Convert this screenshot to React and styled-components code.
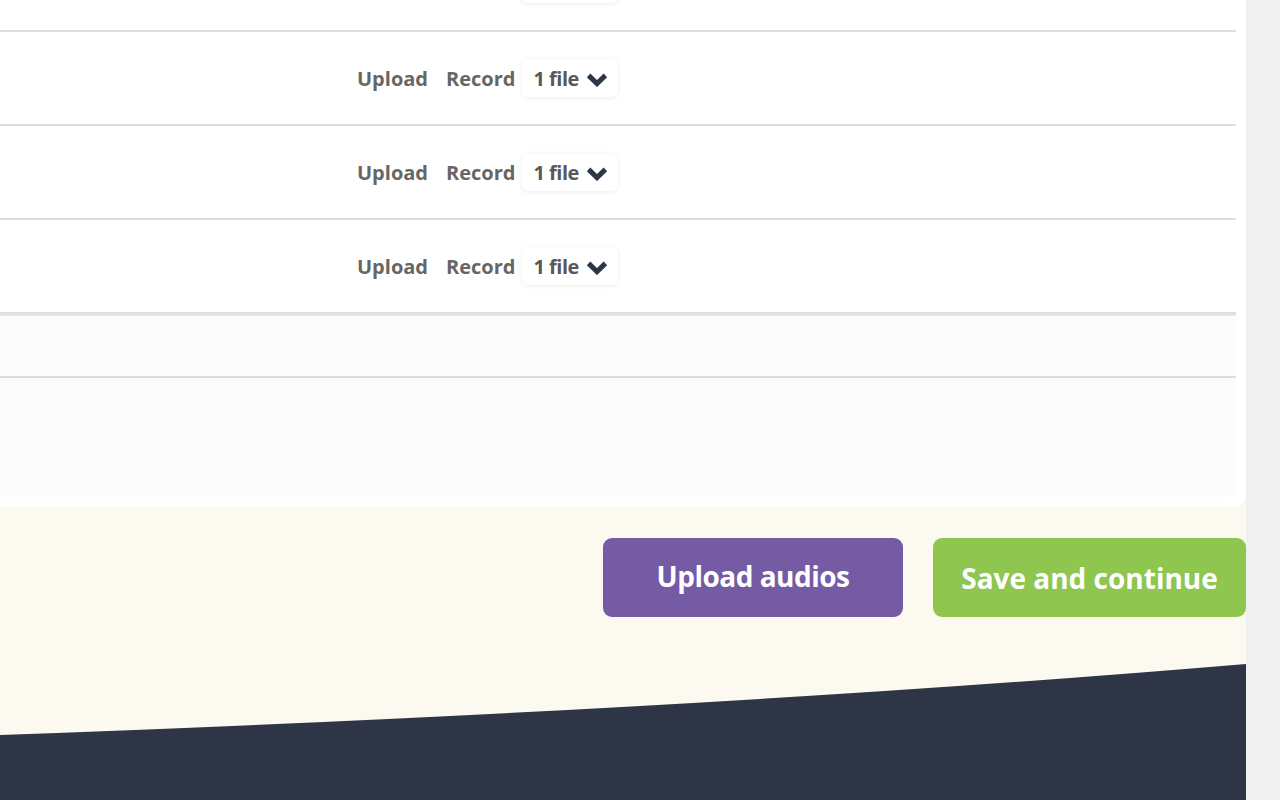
import styled, { createGlobalStyle } from 'styled-components';

const GlobalStyle = createGlobalStyle`
  html, body {
    margin: 0;
    padding: 0;
    background: #f0f0f1;
    overflow: hidden;
  }
  body {
    font-family: 'Open Sans', 'Liberation Sans', sans-serif;
  }
`;

const Page = styled.div`
  display: flex;
  width: 1280px;
  height: 800px;
  overflow: hidden;
`;

const Main = styled.div`
  width: 1246px;
  flex-shrink: 0;
  display: flex;
  flex-direction: column;
  background: #fcf9f1;
`;

const Gutter = styled.div`
  flex: 1;
  background: #f0f0f1;
`;

const Card = styled.div`
  background: #fff;
  padding: 0 10px 10px 0;
  border-bottom-right-radius: 12px;
`;

// list is scrolled: only the bottom of the first row shows
const Table = styled.div`
  margin-top: -62px;
`;

const Row = styled.div`
  display: grid;
  grid-template-columns: 357px auto;
  align-items: center;
  height: 92px;
  border-bottom: 2px solid #dedede;
`;

const Actions = styled.div`
  grid-column: 2;
  display: flex;
  align-items: center;
`;

const ActionLink = styled.a`
  font-size: 20px;
  font-weight: 700;
  color: #666;
  text-decoration: none;
  cursor: pointer;
  margin-right: ${(p) => p.$gap}px;
`;

const FileSelect = styled.div`
  display: flex;
  align-items: center;
  gap: 7px;
  height: 38px;
  padding: 0 10px 0 11px;
  box-sizing: border-box;
  background: #fff;
  border-radius: 6px;
  box-shadow: 0 1px 5px rgba(0, 0, 0, 0.08);
  font-size: 20px;
  font-weight: 700;
  letter-spacing: -0.5px;
  color: #585858;
`;

const ChevronIcon = styled.svg`
  display: block;
  margin-top: 3px;
`;

const Extra = styled.div`
  background: #fbfbfb;
  border-top: 2px solid #e6e6e6;
  border-bottom-right-radius: 8px;
`;

const ExtraHead = styled.div`
  height: 60px;
  border-bottom: 2px solid #dcdcdc;
`;

const ExtraBody = styled.div`
  height: 119px;
`;

const Footer = styled.div`
  flex: 1;
  display: flex;
  flex-direction: column;
`;

const Buttons = styled.div`
  display: flex;
  justify-content: flex-end;
  gap: 30px;
  padding-top: 31px;
`;

const Button = styled.button`
  height: 79px;
  width: ${(p) => p.$width}px;
  border: none;
  border-radius: 9px;
  background: ${(p) => p.$bg};
  color: #fff;
  font-family: 'Open Sans', 'Liberation Sans', sans-serif;
  font-size: 28px;
  font-weight: 700;
  letter-spacing: ${(p) => p.$spacing || 0}px;
  padding: 0 0 ${(p) => p.$lift || 0}px;
  cursor: pointer;
`;

const Wave = styled.svg`
  display: block;
  margin-top: auto;
`;

function Chevron() {
  return (
    <ChevronIcon width="22" height="15" viewBox="0 0 22 15">
      <path
        d="M2.6 3.4 L11 11.6 L19.4 3.4"
        fill="none"
        stroke="#2e3546"
        strokeWidth="5"
        strokeLinejoin="miter"
        strokeMiterlimit="3"
      />
    </ChevronIcon>
  );
}

function FileRow() {
  return (
    <Row>
      <Actions>
        <ActionLink $gap={18}>Upload</ActionLink>
        <ActionLink $gap={7}>Record</ActionLink>
        <FileSelect>
          1 file
          <Chevron />
        </FileSelect>
      </Actions>
    </Row>
  );
}

export default function App() {
  return (
    <>
      <GlobalStyle />
      <Page>
        <Main>
          <Card>
            <Table>
              {[0, 1, 2, 3].map((i) => (
                <FileRow key={i} />
              ))}
            </Table>
            <Extra>
              <ExtraHead />
              <ExtraBody />
            </Extra>
          </Card>
          <Footer>
            <Buttons>
              <Button $width={300} $bg="#745ba4" $spacing={-0.5} $lift={4}>Upload audios</Button>
              <Button $width={313} $bg="#8fc650">Save and continue</Button>
            </Buttons>
            <Wave width="1246" height="136" viewBox="0 664 1246 136">
              <path d="M0 735 Q700 710 1246 664 L1246 800 L0 800 Z" fill="#2e3546" />
            </Wave>
          </Footer>
        </Main>
        <Gutter />
      </Page>
    </>
  );
}
